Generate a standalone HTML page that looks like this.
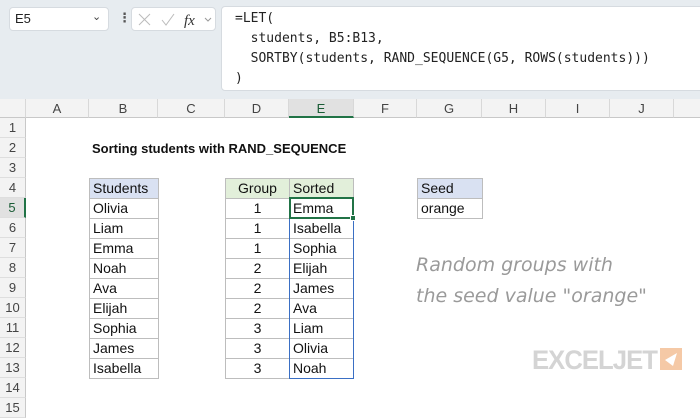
<!DOCTYPE html>
<html><head><meta charset="utf-8"><style>
*{margin:0;padding:0;box-sizing:border-box}
body{width:700px;height:400px;overflow:hidden;background:#fff;font-family:"Liberation Sans","DejaVu Sans",sans-serif;position:relative}
.a{position:absolute}
.top{left:0;top:0;width:700px;height:99px;background:#e7ecf0}
.box{background:#fff;border:1px solid #d6dbe0;border-radius:4px}
.mono{font-family:"DejaVu Sans Mono","Liberation Mono",monospace;font-size:13px;color:#222;line-height:20px;white-space:pre}
.hdr{top:99px;height:19px;background:#f3f3f3;border-bottom:1px solid #c8c8c8;border-right:1px solid #d8d8d8;font-size:13px;color:#444;text-align:center;line-height:19px}
.rh{left:0;width:26px;height:20px;background:#f3f3f3;border-right:1px solid #c8c8c8;border-bottom:1px solid #dedede;font-size:13px;color:#444;text-align:center;line-height:20px}
.c{height:21px;border:1px solid #bdbdbd;font-size:14px;color:#111;line-height:19px;padding-left:3px;margin-top:-1px}
</style></head><body>
<div class="a top"></div>
<div class="a box" style="left:9px;top:7px;width:100px;height:24px"></div>
<div class="a" style="left:15px;top:11px;font-size:13px;color:#222">E5</div>
<div class="a" style="left:92px;top:10px;font-size:11px;color:#444">&#8964;</div>
<div class="a" style="left:118px;top:10px;font-size:13px;color:#555;font-weight:bold">&#8942;</div>
<div class="a box" style="left:131px;top:7px;width:85px;height:24px"></div>
<svg class="a" style="left:136px;top:12px" width="80" height="16"><path d="M3 2l11 11M14 2L3 13" stroke="#bbb" fill="none"/><path d="M26 8l4 5 8-11" stroke="#bbb" fill="none"/><text x="48" y="13" font-family="Liberation Serif,serif" font-style="italic" font-size="15" fill="#333">fx</text><path d="M69 6l3 3 3-3" stroke="#999" fill="none"/></svg>
<div class="a box" style="left:221px;top:6px;width:490px;height:85px"></div>
<div class="a mono" style="left:235px;top:9px">=LET(
  students, B5:B13,
  SORTBY(students, RAND_SEQUENCE(G5, ROWS(students)))
)</div>
<div class="a hdr" style="left:0;width:26px"></div>
<div class="a hdr" style="left:26px;width:63px">A</div>
<div class="a hdr" style="left:89px;width:69px">B</div>
<div class="a hdr" style="left:158px;width:67px">C</div>
<div class="a hdr" style="left:225px;width:64px">D</div>
<div class="a hdr" style="left:289px;width:65px;background:#e1e1e1;border-bottom:2px solid #217346;color:#1a5c36">E</div>
<div class="a hdr" style="left:354px;width:63px">F</div>
<div class="a hdr" style="left:417px;width:65px">G</div>
<div class="a hdr" style="left:482px;width:64px">H</div>
<div class="a hdr" style="left:546px;width:64px">I</div>
<div class="a hdr" style="left:610px;width:64px">J</div>
<div class="a hdr" style="left:674px;width:30px"></div>
<div class="a rh" style="top:118px">1</div><div class="a rh" style="top:138px">2</div><div class="a rh" style="top:158px">3</div><div class="a rh" style="top:178px">4</div>
<div class="a rh" style="top:198px;background:#e1e1e1;border-right:2px solid #217346;color:#1a5c36">5</div>
<div class="a rh" style="top:218px">6</div><div class="a rh" style="top:238px">7</div><div class="a rh" style="top:258px">8</div><div class="a rh" style="top:278px">9</div><div class="a rh" style="top:298px">10</div><div class="a rh" style="top:318px">11</div><div class="a rh" style="top:338px">12</div><div class="a rh" style="top:358px">13</div><div class="a rh" style="top:378px">14</div><div class="a rh" style="top:398px">15</div>
<div class="a" style="left:92px;top:141px;font-size:13px;font-weight:bold;color:#111">Sorting students with RAND_SEQUENCE</div>
<div class="a" style="left:89px;top:179px;width:70px">
<div class="c" style="background:#d9e1f2">Students</div><div class="c">Olivia</div><div class="c">Liam</div><div class="c">Emma</div><div class="c">Noah</div><div class="c">Ava</div><div class="c">Elijah</div><div class="c">Sophia</div><div class="c">James</div><div class="c">Isabella</div></div>
<div class="a" style="left:225px;top:179px;width:65px;text-align:center">
<div class="c" style="background:#e2efda;padding:0">Group</div><div class="c" style="padding:0">1</div><div class="c" style="padding:0">1</div><div class="c" style="padding:0">1</div><div class="c" style="padding:0">2</div><div class="c" style="padding:0">2</div><div class="c" style="padding:0">2</div><div class="c" style="padding:0">3</div><div class="c" style="padding:0">3</div><div class="c" style="padding:0">3</div></div>
<div class="a" style="left:289px;top:179px;width:65px">
<div class="c" style="background:#e2efda">Sorted</div><div class="c">Emma</div><div class="c">Isabella</div><div class="c">Sophia</div><div class="c">Elijah</div><div class="c">James</div><div class="c">Ava</div><div class="c">Liam</div><div class="c">Olivia</div><div class="c">Noah</div></div>
<div class="a" style="left:289px;top:198px;width:65px;height:181px;border:1px solid #3a6fc4"></div>
<div class="a" style="left:289px;top:197px;width:65px;height:22px;border:2px solid #217346"></div>
<div class="a" style="left:350px;top:215px;width:6px;height:6px;background:#217346;border:1px solid #fff"></div>
<div class="a" style="left:417px;top:179px;width:66px">
<div class="c" style="background:#d9e1f2">Seed</div><div class="c">orange</div></div>
<div class="a" style="left:416px;top:250px;font-family:'Comic Sans MS','DejaVu Sans',cursive;font-style:italic;font-size:19px;line-height:31px;color:#9a9a9a">Random groups with<br>the seed value "orange"</div>
<div class="a" style="left:532px;top:345px;font-size:27px;font-weight:bold;color:#d4d4d4;letter-spacing:-1px;transform:scaleX(0.95);transform-origin:left">EXCELJET</div>
<svg class="a" style="left:660px;top:348px" width="22" height="22"><rect width="22" height="22" fill="#f5c9a6"/><path d="M5 12l12-7-4 13z" fill="#fff"/></svg>
</body></html>
